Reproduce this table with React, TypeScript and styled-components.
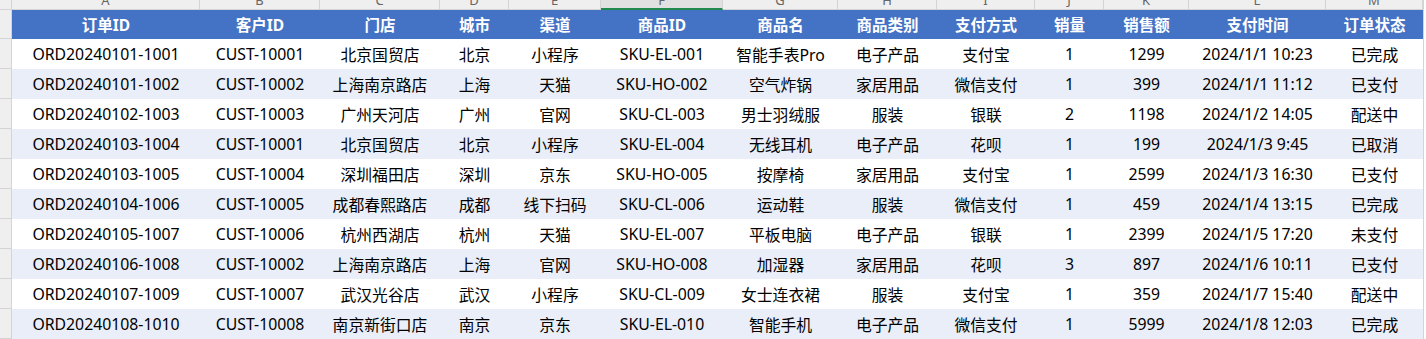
import React from 'react';
import styled, { createGlobalStyle } from 'styled-components';

const GlobalStyle = createGlobalStyle`
    html, body {
        margin: 0;
        padding: 0;
        background: #ffffff;
        overflow: hidden;
    }
    body {
        font-family: "Noto Sans", "Noto Sans CJK SC", sans-serif;
    }
`;

const columns = [
    { letter: 'A', title: '订单ID', width: 188 },
    { letter: 'B', title: '客户ID', width: 120 },
    { letter: 'C', title: '门店', width: 120 },
    { letter: 'D', title: '城市', width: 69 },
    { letter: 'E', title: '渠道', width: 92 },
    { letter: 'F', title: '商品ID', width: 122 },
    { letter: 'G', title: '商品名', width: 115 },
    { letter: 'H', title: '商品类别', width: 99 },
    { letter: 'I', title: '支付方式', width: 98 },
    { letter: 'J', title: '销量', width: 69 },
    { letter: 'K', title: '销售额', width: 85 },
    { letter: 'L', title: '支付时间', width: 137 },
    { letter: 'M', title: '订单状态', width: 97 },
];

const rows: string[][] = [
    ['ORD20240101-1001', 'CUST-10001', '北京国贸店', '北京', '小程序', 'SKU-EL-001', '智能手表Pro', '电子产品', '支付宝', '1', '1299', '2024/1/1 10:23', '已完成'],
    ['ORD20240101-1002', 'CUST-10002', '上海南京路店', '上海', '天猫', 'SKU-HO-002', '空气炸锅', '家居用品', '微信支付', '1', '399', '2024/1/1 11:12', '已支付'],
    ['ORD20240102-1003', 'CUST-10003', '广州天河店', '广州', '官网', 'SKU-CL-003', '男士羽绒服', '服装', '银联', '2', '1198', '2024/1/2 14:05', '配送中'],
    ['ORD20240103-1004', 'CUST-10001', '北京国贸店', '北京', '小程序', 'SKU-EL-004', '无线耳机', '电子产品', '花呗', '1', '199', '2024/1/3 9:45', '已取消'],
    ['ORD20240103-1005', 'CUST-10004', '深圳福田店', '深圳', '京东', 'SKU-HO-005', '按摩椅', '家居用品', '支付宝', '1', '2599', '2024/1/3 16:30', '已支付'],
    ['ORD20240104-1006', 'CUST-10005', '成都春熙路店', '成都', '线下扫码', 'SKU-CL-006', '运动鞋', '服装', '微信支付', '1', '459', '2024/1/4 13:15', '已完成'],
    ['ORD20240105-1007', 'CUST-10006', '杭州西湖店', '杭州', '天猫', 'SKU-EL-007', '平板电脑', '电子产品', '银联', '1', '2399', '2024/1/5 17:20', '未支付'],
    ['ORD20240106-1008', 'CUST-10002', '上海南京路店', '上海', '官网', 'SKU-HO-008', '加湿器', '家居用品', '花呗', '3', '897', '2024/1/6 10:11', '已支付'],
    ['ORD20240107-1009', 'CUST-10007', '武汉光谷店', '武汉', '小程序', 'SKU-CL-009', '女士连衣裙', '服装', '支付宝', '1', '359', '2024/1/7 15:40', '配送中'],
    ['ORD20240108-1010', 'CUST-10008', '南京新街口店', '南京', '京东', 'SKU-EL-010', '智能手机', '电子产品', '微信支付', '1', '5999', '2024/1/8 12:03', '已完成'],
];

const Sheet = styled.div`
    display: grid;
    grid-template-columns: 12px ${columns.map((c) => `${c.width}px`).join(' ')} 1fr;
    grid-template-rows: 10px 29px repeat(${rows.length}, 30px);
    width: 1426px;
    height: 339px;
    overflow: hidden;
`;

const Corner = styled.div`
    background: #efefef;
    border-right: 1px solid #d4d4d4;
    border-bottom: 1px solid #d4d4d4;
    box-sizing: border-box;
`;

const ColLetter = styled.div<{ $selected?: boolean }>`
    background: ${(p) => (p.$selected ? '#e1e1e1' : '#efefef')};
    border-right: 1px solid #d4d4d4;
    border-bottom: ${(p) => (p.$selected ? '2px solid #1f8a4c' : '1px solid #d4d4d4')};
    box-sizing: border-box;
    overflow: hidden;
    text-align: center;
    color: #666666;
    font-family: "Noto Sans", sans-serif;
    font-size: 13px;
    span {
        display: block;
        line-height: 10px;
        margin-top: -5px;
    }
`;

const Filler = styled.div`
    background: #ffffff;
    border-left: 1px solid #d4d4d4;
`;

const RowNum = styled.div`
    background: #efefef;
    border-right: 1px solid #d4d4d4;
    border-bottom: 1px solid #d4d4d4;
    box-sizing: border-box;
`;

const HeadCell = styled.div`
    background: #4472c4;
    color: #ffffff;
    font-weight: bold;
    font-size: 15.5px;
    display: flex;
    align-items: center;
    justify-content: center;
    white-space: nowrap;
`;

const Cell = styled.div<{ $alt: boolean }>`
    background: ${(p) => (p.$alt ? '#e9eef8' : '#ffffff')};
    color: #000000;
    font-size: 15.8px;
    display: flex;
    align-items: center;
    justify-content: center;
    white-space: nowrap;
`;

export default function App() {
    return (
        <>
            <GlobalStyle />
            <Sheet>
                <Corner />
                {columns.map((c) => (
                    <ColLetter key={c.letter} $selected={c.letter === 'F'}>
                        <span>{c.letter}</span>
                    </ColLetter>
                ))}
                <Filler />

                <RowNum />
                {columns.map((c) => (
                    <HeadCell key={c.letter}>{c.title}</HeadCell>
                ))}
                <Filler />

                {rows.map((row, i) => (
                    <React.Fragment key={row[0]}>
                        <RowNum />
                        {row.map((v, j) => (
                            <Cell key={j} $alt={i % 2 === 1}>
                                {v}
                            </Cell>
                        ))}
                        <Filler />
                    </React.Fragment>
                ))}
            </Sheet>
        </>
    );
}
